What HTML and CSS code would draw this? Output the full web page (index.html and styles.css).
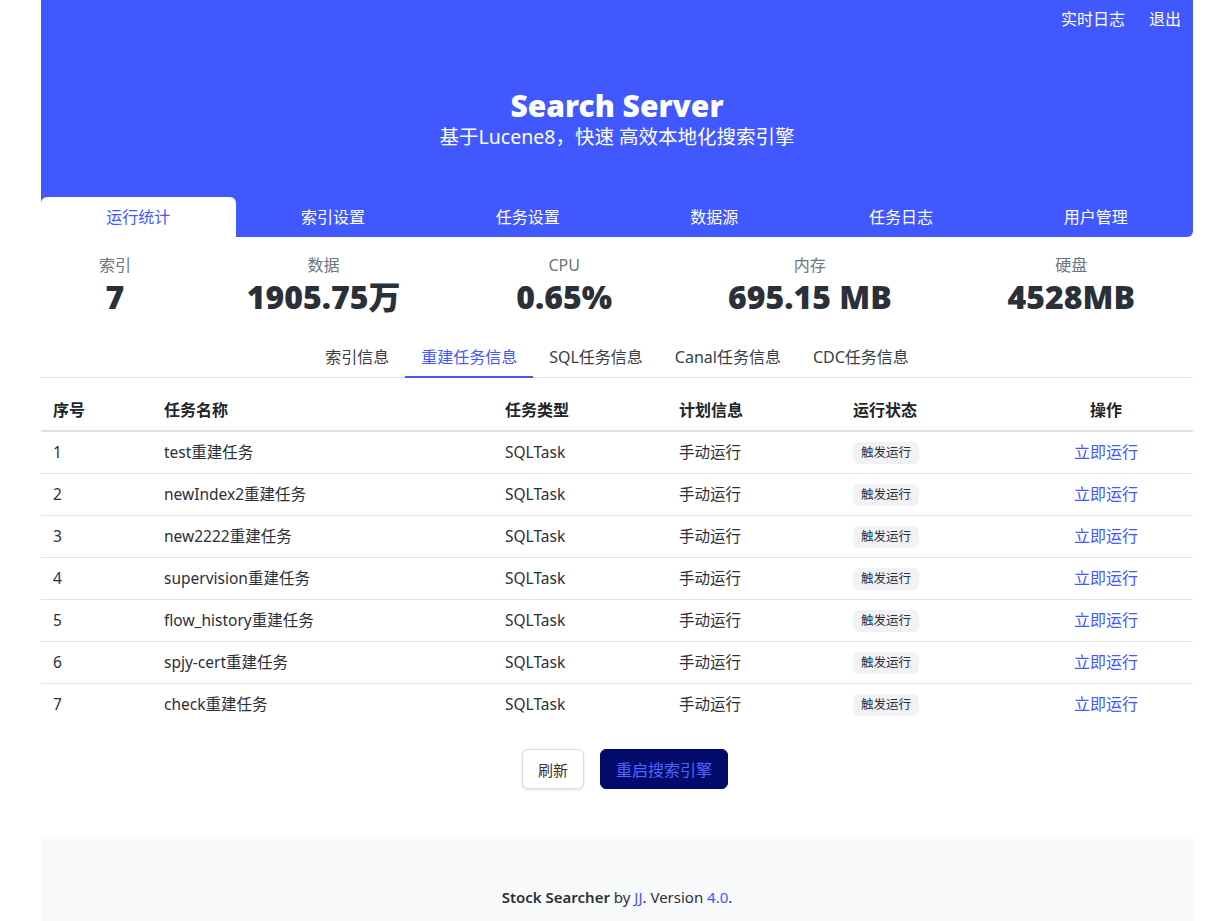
FILE: index.html
```html
<!DOCTYPE html>
<html lang="zh">
<head>
<meta charset="utf-8">
<title>Search Server</title>
<link rel="stylesheet" href="styles.css">
</head>
<body>
<div class="page">
  <header class="header">
    <nav class="topbar">
      <a class="toplink" href="#">实时日志</a>
      <a class="toplink" href="#">退出</a>
    </nav>
    <div class="hero">
      <h1 class="title">Search Server</h1>
      <p class="subtitle">基于Lucene8，快速 高效本地化搜索引擎</p>
    </div>
    <div class="tabs">
      <a class="tab active" href="#">运行统计</a>
      <a class="tab" href="#">索引设置</a>
      <a class="tab" href="#">任务设置</a>
      <a class="tab" href="#">数据源</a>
      <a class="tab" href="#">任务日志</a>
      <a class="tab" href="#">用户管理</a>
    </div>
  </header>

  <section class="stats">
    <div class="stat"><div class="stat-label">索引</div><div class="stat-value">7</div></div>
    <div class="stat"><div class="stat-label">数据</div><div class="stat-value">1905.75万</div></div>
    <div class="stat"><div class="stat-label">CPU</div><div class="stat-value">0.65%</div></div>
    <div class="stat"><div class="stat-label">内存</div><div class="stat-value">695.15 MB</div></div>
    <div class="stat"><div class="stat-label">硬盘</div><div class="stat-value">4528MB</div></div>
  </section>

  <nav class="subtabs">
    <a class="subtab" href="#">索引信息</a>
    <a class="subtab active" href="#">重建任务信息</a>
    <a class="subtab" href="#">SQL任务信息</a>
    <a class="subtab" href="#">Canal任务信息</a>
    <a class="subtab" href="#">CDC任务信息</a>
  </nav>

  <table class="tasks">
    <colgroup>
      <col class="c1"><col class="c2"><col class="c3"><col class="c4"><col class="c5"><col class="c6">
    </colgroup>
    <thead>
      <tr><th>序号</th><th>任务名称</th><th>任务类型</th><th>计划信息</th><th>运行状态</th><th class="center">操作</th></tr>
    </thead>
    <tbody>
      <tr><td>1</td><td>test重建任务</td><td>SQLTask</td><td>手动运行</td><td><span class="badge">触发运行</span></td><td class="center"><a class="run" href="#">立即运行</a></td></tr>
      <tr><td>2</td><td>newIndex2重建任务</td><td>SQLTask</td><td>手动运行</td><td><span class="badge">触发运行</span></td><td class="center"><a class="run" href="#">立即运行</a></td></tr>
      <tr><td>3</td><td>new2222重建任务</td><td>SQLTask</td><td>手动运行</td><td><span class="badge">触发运行</span></td><td class="center"><a class="run" href="#">立即运行</a></td></tr>
      <tr><td>4</td><td>supervision重建任务</td><td>SQLTask</td><td>手动运行</td><td><span class="badge">触发运行</span></td><td class="center"><a class="run" href="#">立即运行</a></td></tr>
      <tr><td>5</td><td>flow_history重建任务</td><td>SQLTask</td><td>手动运行</td><td><span class="badge">触发运行</span></td><td class="center"><a class="run" href="#">立即运行</a></td></tr>
      <tr><td>6</td><td>spjy-cert重建任务</td><td>SQLTask</td><td>手动运行</td><td><span class="badge">触发运行</span></td><td class="center"><a class="run" href="#">立即运行</a></td></tr>
      <tr><td>7</td><td>check重建任务</td><td>SQLTask</td><td>手动运行</td><td><span class="badge">触发运行</span></td><td class="center"><a class="run" href="#">立即运行</a></td></tr>
    </tbody>
  </table>

  <div class="actions">
    <button class="btn btn-light" type="button">刷新</button>
    <button class="btn btn-dark" type="button">重启搜索引擎</button>
  </div>

  <footer class="footer">
    <p><strong>Stock Searcher</strong> by <a href="#">JJ</a>. Version <a href="#">4.0</a>.</p>
  </footer>
</div>
</body>
</html>
```

FILE: styles.css
```css
* { box-sizing: border-box; }
html, body { margin: 0; padding: 0; background: #fff; }
body {
  font-family: "Noto Sans", "Noto Sans CJK SC", sans-serif;
  color: #212529;
  font-size: 15px;
}
a { text-decoration: none; }

.page {
  width: 1152px;
  margin-left: 41px;
}

/* header */
.header {
  background: #4258ff;
  border-radius: 0 0 6px 0;
}
.topbar {
  display: flex;
  justify-content: flex-end;
  gap: 24px;
  padding: 7px 12px 0;
  height: 31px;
}
.toplink {
  color: #fff;
  font-size: 16px;
  line-height: 24px;
}
.hero {
  text-align: center;
  color: #fff;
  padding-top: 57px;
  height: 166px;
}
.title {
  margin: 0;
  font-size: 30px;
  line-height: 36px;
  font-weight: 900;
  letter-spacing: 0;
}
.subtitle {
  margin: 0;
  font-size: 19.5px;
  line-height: 26px;
}
.tabs {
  display: flex;
  height: 40px;
}
.tab {
  flex: 1 1 auto;
  display: flex;
  align-items: center;
  justify-content: center;
  padding: 0 0 2px;
  color: #fff;
  font-size: 16px;
}
.tab.active {
  background: #fff;
  color: #4258ff;
  border-radius: 6px 6px 0 0;
}

/* stats */
.stats {
  display: flex;
  justify-content: space-around;
  padding: 17px 0 0;
}
.stat { text-align: center; }
.stat-label {
  color: #6c757d;
  font-size: 16px;
  line-height: 22px;
}
.stat-value {
  margin-top: 3px;
  color: #2b2f38;
  font-size: 32px;
  line-height: 36px;
  font-weight: 900;
}

/* sub tabs */
.subtabs {
  display: flex;
  justify-content: center;
  margin-top: 22px;
  border-bottom: 1px solid #dee2e6;
}
.subtab {
  padding: 8px 16px 7px;
  color: #3a3d44;
  font-size: 16px;
  line-height: 24px;
  border-bottom: 2px solid transparent;
  margin-bottom: -1px;
}
.subtab.active {
  color: #4258ff;
  border-bottom-color: #4258ff;
}

/* table */
.tasks {
  width: 100%;
  border-collapse: collapse;
  margin-top: 10px;
  table-layout: fixed;
}
.c1 { width: 111px; }
.c2 { width: 341px; }
.c3 { width: 174px; }
.c4 { width: 174px; }
.c5 { width: 178px; }
.c6 { width: 174px; }
.tasks th {
  text-align: left;
  font-weight: 700;
  font-size: 16px;
  line-height: 24px;
  padding: 10px 12px 8px;
  color: #212529;
  border-bottom: 2px solid #dee2e6;
}
.tasks tbody tr { height: 42px; }
.tasks td {
  font-size: 15.5px;
  line-height: 22px;
  padding: 0 12px;
  color: #2b2f38;
  border-top: 1px solid #dee2e6;
  vertical-align: middle;
}
.tasks tbody tr:first-child td { border-top: 0; }
.tasks .center { text-align: center; }
.badge {
  display: inline-block;
  background: #f1f2f5;
  color: #2b2f38;
  font-size: 12.5px;
  line-height: 16px;
  padding: 3px 8px;
  border-radius: 6px;
  vertical-align: middle;
}
.run { color: #4258ff; font-size: 16px; }

/* actions */
.actions {
  display: flex;
  justify-content: center;
  gap: 16px;
  margin-top: 24px;
  padding-left: 16px;
}
.btn {
  height: 40px;
  padding: 0 15px;
  font-family: inherit;
  font-size: 15px;
  border-radius: 6px;
  cursor: pointer;
}
.btn-light {
  background: #fff;
  color: #333;
  border: 1px solid #d8dbe2;
  box-shadow: 0 1px 3px rgba(0,0,0,0.12);
}
.btn-dark {
  background: #020b6b;
  color: #4f66ff;
  border: 1px solid #020b6b;
  font-size: 16px;
}

/* footer */
.footer {
  margin-top: 48px;
  background: #f8f9fa;
  padding: 48px 0 20px;
  text-align: center;
}
.footer p {
  margin: 0;
  font-size: 15px;
  line-height: 24px;
  color: #2b2f38;
}
.footer strong { font-weight: 600; }
.footer a { color: #4258ff; }
```
